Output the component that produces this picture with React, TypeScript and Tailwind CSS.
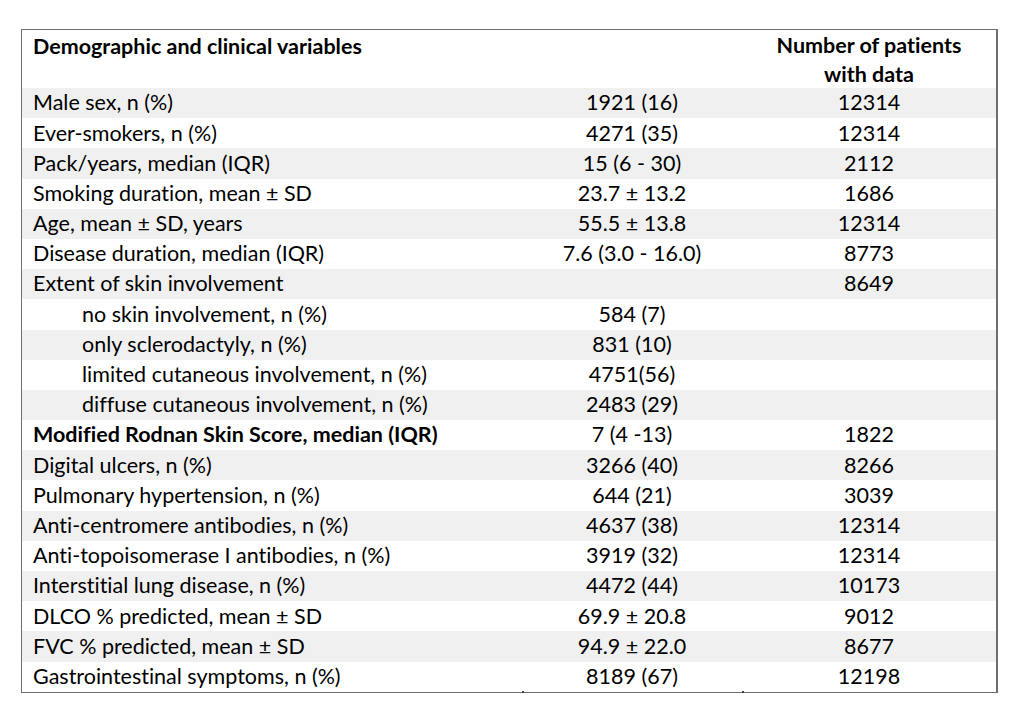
const rows: { label: string; value: string; n: string; indent?: boolean; bold?: boolean }[] = [
  { label: "Male sex, n (%)", value: "1921 (16)", n: "12314" },
  { label: "Ever-smokers, n (%)", value: "4271 (35)", n: "12314" },
  { label: "Pack/years, median (IQR)", value: "15 (6 - 30)", n: "2112" },
  { label: "Smoking duration, mean ± SD", value: "23.7 ± 13.2", n: "1686" },
  { label: "Age, mean ± SD, years", value: "55.5 ± 13.8", n: "12314" },
  { label: "Disease duration, median (IQR)", value: "7.6 (3.0 - 16.0)", n: "8773" },
  { label: "Extent of skin involvement", value: "", n: "8649" },
  { label: "no skin involvement, n (%)", value: "584 (7)", n: "", indent: true },
  { label: "only sclerodactyly, n (%)", value: "831 (10)", n: "", indent: true },
  { label: "limited cutaneous involvement, n (%)", value: "4751(56)", n: "", indent: true },
  { label: "diffuse cutaneous involvement, n (%)", value: "2483 (29)", n: "", indent: true },
  { label: "Modified Rodnan Skin Score, median (IQR)", value: "7 (4 -13)", n: "1822", bold: true },
  { label: "Digital ulcers, n (%)", value: "3266 (40)", n: "8266" },
  { label: "Pulmonary hypertension, n (%)", value: "644 (21)", n: "3039" },
  { label: "Anti-centromere antibodies, n (%)", value: "4637 (38)", n: "12314" },
  { label: "Anti-topoisomerase I antibodies, n (%)", value: "3919 (32)", n: "12314" },
  { label: "Interstitial lung disease, n (%)", value: "4472 (44)", n: "10173" },
  { label: "DLCO % predicted, mean ± SD", value: "69.9 ± 20.8", n: "9012" },
  { label: "FVC % predicted, mean ± SD", value: "94.9 ± 22.0", n: "8677" },
  { label: "Gastrointestinal symptoms, n (%)", value: "8189 (67)", n: "12198" },
];

export default function App() {
  return (
    <div
      className="h-[725px] w-[1019px] bg-white pl-[21px] pt-[29px] text-[21.5px] leading-none text-black [font-variant-ligatures:none]"
      style={{ fontFamily: "Lato, 'Open Sans', sans-serif" }}
    >
      <div className="relative w-[977px] border border-r-2 border-[#6e6e6e]">
        {/* header */}
        <div className="grid h-[58px] grid-cols-[500px_220px_1fr] font-bold">
          <div className="pl-[11px] pt-[6px]">Demographic and clinical variables</div>
          <div />
          <div className="pt-[1px] text-center leading-[29px]">
            Number of patients
            <br />
            with data
          </div>
        </div>
        {rows.map((r, i) => (
          <div
            key={r.label}
            className={`grid h-[30.2px] grid-cols-[500px_220px_1fr] items-center ${i % 2 === 0 ? "bg-[#f0f0f0]" : "bg-white"}`}
          >
            <div className={`${r.indent ? "pl-[60px]" : "pl-[11px]"} ${r.bold ? "font-bold" : ""}`}>{r.label}</div>
            <div className="text-center">{r.value}</div>
            <div className="text-center">{r.n}</div>
          </div>
        ))}
        <div className="absolute -bottom-[1px] left-[500px] h-[2px] w-[2px] bg-[#444]" />
        <div className="absolute -bottom-[1px] left-[720px] h-[2px] w-[2px] bg-[#444]" />
      </div>
    </div>
  );
}
